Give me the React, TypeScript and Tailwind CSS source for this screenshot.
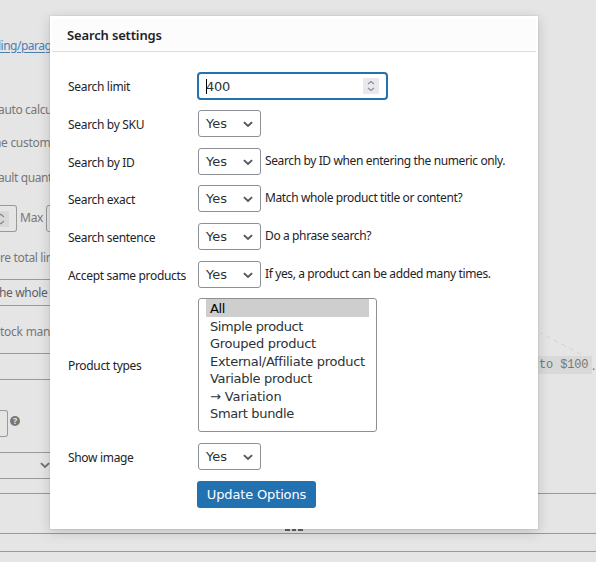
import type { ReactNode } from "react";

function Chevron({ className = "" }: { className?: string }) {
  return (
    <svg className={className} width="10" height="7" viewBox="0 0 10 7" fill="none" stroke="#50575e" strokeWidth="1.9">
      <path d="M0.9 1.1 L5 5 L9.1 1.1" />
    </svg>
  );
}

function YesSelect() {
  return (
    <div className="flex h-[27px] w-[63px] shrink-0 items-center justify-between rounded-[3px] border border-[#8c8f94] bg-white pr-[7px] pl-[7px] font-['DejaVu_Sans',sans-serif] text-[13px] tracking-normal text-[#2c3338]">
      <span className="leading-[25px]">Yes</span>
      <Chevron className="mt-px" />
    </div>
  );
}

function Row({ label, height, children }: { label: string; height: string; children: ReactNode }) {
  return (
    <div className={`flex items-start ${height}`}>
      <div className="w-[130px] shrink-0 self-stretch whitespace-nowrap pt-[5px] leading-[20px]">{label}</div>
      {children}
    </div>
  );
}

function Hint({ children }: { children: ReactNode }) {
  return <span className="ml-[4px] pt-[3px] leading-[20px] tracking-[-0.38px] whitespace-nowrap">{children}</span>;
}

const types = [
  { name: "Simple product", tracking: "tracking-[-0.4px]" },
  { name: "Grouped product", tracking: "tracking-[-0.27px]" },
  { name: "External/Affiliate product", tracking: "tracking-[-0.27px]" },
  { name: "Variable product", tracking: "tracking-[-0.3px]" },
  { name: "→ Variation", tracking: "tracking-[-0.1px]" },
  { name: "Smart bundle", tracking: "tracking-[-0.35px]" },
];

function Backdrop() {
  return (
    <div className="flex h-[562px] flex-col overflow-hidden text-[12px] text-[#777] whitespace-nowrap">
      <div className="flex h-[493px] justify-between">
        <div className="flex w-[50px] flex-col overflow-hidden tracking-[-0.25px]">
          <div className="-ml-[2px] mt-[36px] h-[20px] leading-[20px] tracking-[-0.5px] text-[#4a7fb5] underline underline-offset-2">ling/parag</div>
          <div className="-ml-[2px] mt-[44px] h-[20px] leading-[20px] tracking-[-0.35px]">auto calcu</div>
          <div className="-ml-[6px] mt-[13px] h-[20px] leading-[20px] tracking-[-0.3px]">he custom</div>
          <div className="-ml-[2px] mt-[15px] h-[20px] leading-[20px] tracking-[-0.4px]">ault quant</div>
          <div className="mt-[17px] flex h-[27px]">
            <div className="flex w-[17px] shrink-0 items-center rounded-r-[3px] border border-l-0 border-[#999]">
              <div className="flex h-[16px] w-[9px] items-center bg-[#d8d8db]">
                <svg width="5" height="12" viewBox="0 0 5 12" fill="none" stroke="#8b8b8b" strokeWidth="1.3">
                  <path d="M0 1.5 L1 1.5 L4 4 M0 10.5 L1 10.5 L4 8" />
                </svg>
              </div>
            </div>
            <span className="ml-[3px] w-[26px] shrink-0 leading-[25px]">Max</span>
            <div className="w-[40px] shrink-0 rounded-l-[3px] border border-[#999]" />
          </div>
          <div className="mt-[16px] h-[20px] leading-[20px] tracking-[-0.35px]">re total lin</div>
          <div className="-ml-[5px] mt-[11px] h-[27px] w-[80px] border-y border-[#999] leading-[26px] tracking-[-0.35px] text-[#5c6064]">the whole</div>
          <div className="mt-[16px] h-[20px] leading-[20px] tracking-[-0.25px]">tock man</div>
          <div className="mt-[11px] h-[27px] border-y border-[#999]" />
          <div className="mt-[30px] flex h-[27px]">
            <div className="w-[8px] rounded-r-[3px] border border-l-0 border-[#999]" />
            <div className="mt-[6px] ml-[2px] flex size-[10px] items-center justify-center rounded-full bg-[#777] text-[9px] font-bold text-[#e5e5e5]">?</div>
          </div>
          <div className="mt-[15px] flex h-[27px] items-center justify-end border-y border-[#999]">
            <Chevron className="opacity-80" />
          </div>
        </div>
        <div className="flex w-[58px] flex-col">
          <svg className="mt-[330px]" width="58" height="26" viewBox="0 0 58 26" fill="none" stroke="#c0c0c0" strokeDasharray="1.2 5 1.2 1.4">
            <path d="M3 3 L46 26" />
          </svg>
          <div className="flex h-[18px] leading-[19px] font-['Liberation_Mono',monospace] text-[12px]">
            <span className="w-[54px] bg-[#d9d9d9] pl-[1px] tracking-[-0.15px]">to $100</span>
            <span className="font-['Noto_Sans',sans-serif]">.</span>
          </div>
        </div>
      </div>
      <div className="h-[41px] border-y border-[#999]" />
      <div className="mt-[17px] h-[11px] border-t border-[#999]" />
    </div>
  );
}

export default function App() {
  return (
    <div className="relative h-[562px] w-[596px] overflow-hidden bg-[#e5e5e5] font-['Noto_Sans',sans-serif]">
      <Backdrop />
      <section className="absolute top-[16px] left-[50px] h-[513px] w-[488px] bg-white text-[12px] tracking-[-0.32px] text-[#1d2327] shadow-[0_3px_12px_rgba(0,0,0,0.16),0_0_1px_1px_rgba(0,0,0,0.04)]">
        <header className="mx-[2px] h-[36px] border-b border-[#dcdcde] bg-[#fcfcfc] bg-clip-content pt-[3px]">
          <h2 className="pl-[15px] text-[13px] leading-[33px] font-semibold tracking-[-0.15px]">Search settings</h2>
        </header>
        <div className="pt-[20px] pl-[18px]">
          <Row label="Search limit" height="h-[38px]">
            <div className="-ml-px flex h-[28px] w-[191px] items-center justify-between rounded-[4px] border-2 border-[#2271b1] bg-white pr-[7px] pl-[7px] font-['DejaVu_Sans',sans-serif] text-[13px] text-[#2c3338]">
              <span className="flex h-[15px] border-l border-black leading-[15px]">
                <span className="-ml-px">400</span>
              </span>
              <span className="flex size-[16px] items-center justify-center bg-[#e9e9ed]">
                <svg width="8" height="12" viewBox="0 0 8 12" fill="none" stroke="#8f8f9d" strokeWidth="1.3">
                  <path d="M1 4 L4 1.5 L7 4 M1 8 L4 10.5 L7 8" />
                </svg>
              </span>
            </div>
          </Row>
          <Row label="Search by SKU" height="h-[38px]"><YesSelect /></Row>
          <Row label="Search by ID" height="h-[37px]"><YesSelect /><Hint>Search by ID when entering the numeric only.</Hint></Row>
          <Row label="Search exact" height="h-[38px]"><YesSelect /><Hint>Match whole product title or content?</Hint></Row>
          <Row label="Search sentence" height="h-[38px]"><YesSelect /><Hint>Do a phrase search?</Hint></Row>
          <Row label="Accept same products" height="h-[37px]"><YesSelect /><Hint>If yes, a product can be added many times.</Hint></Row>
          <div className="flex h-[145px]">
            <div className="w-[130px] pt-[58px] leading-[20px]">Product types</div>
            <div className="h-[134px] w-[179px] rounded-[3px] border border-[#8c8f94] px-[7px] font-['DejaVu_Sans',sans-serif] text-[13px] leading-[17.5px] text-[#2c3338]">
              <div className="mb-[0.5px] h-[18px] bg-[#cecece] pl-[4px] leading-[19px] text-black">All</div>
              {types.map((t) => <div key={t.name} className={`pl-[4px] whitespace-nowrap ${t.tracking}`}>{t.name}</div>)}
            </div>
          </div>
          <Row label="Show image" height="h-[38px]"><YesSelect /></Row>
          <button className="ml-[129px] block h-[27px] w-[119px] rounded-[3px] bg-[#2271b1] font-['DejaVu_Sans',sans-serif] text-[13px] tracking-[-0.15px] whitespace-nowrap text-white">Update Options</button>
        </div>
      </section>
      <div className="absolute top-[529px] left-[285px] flex gap-[2px]">
        <i className="h-[2px] w-[5px] bg-[#50575e]" />
        <i className="h-[2px] w-[4px] bg-[#50575e]" />
        <i className="h-[2px] w-[5px] bg-[#50575e]" />
      </div>
    </div>
  );
}
